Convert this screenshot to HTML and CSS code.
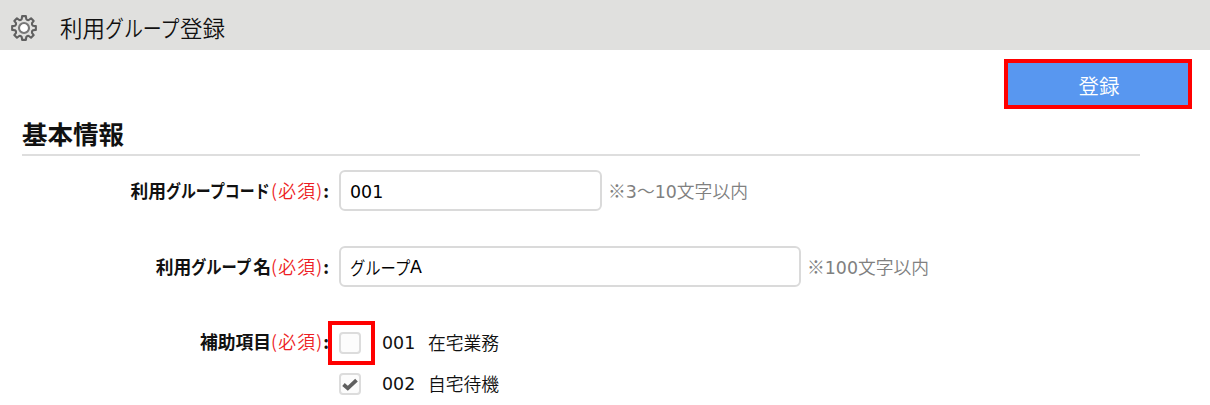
FILE: index.html
```html
<!DOCTYPE html>
<html lang="ja">
<head>
<meta charset="utf-8">
<title>利用グループ登録</title>
<link rel="stylesheet" href="styles.css">
</head>
<body>
<header class="topbar">
  <svg class="gear" viewBox="-13 -13 26 26" fill="none" stroke="#606060" stroke-width="2.1" stroke-linejoin="round">
    <path d="M-1.88-11.85L1.88-11.85L2.25-9.02Q3.14-7.58 4.79-7.97L7.05-9.71L9.71-7.05L7.97-4.79Q7.58-3.14 9.02-2.25L11.85-1.88L11.85 1.88L9.02 2.25Q7.58 3.14 7.97 4.79L9.71 7.05L7.05 9.71L4.79 7.97Q3.14 7.58 2.25 9.02L1.88 11.85L-1.88 11.85L-2.25 9.02Q-3.14 7.58-4.79 7.97L-7.05 9.71L-9.71 7.05L-7.97 4.79Q-7.58 3.14-9.02 2.25L-11.85 1.88L-11.85-1.88L-9.02-2.25Q-7.58-3.14-7.97-4.79L-9.71-7.05L-7.05-9.71L-4.79-7.97Q-3.14-7.58-2.25-9.02Z"/>
    <circle r="5" fill="#fff" stroke="#777"/>
  </svg>
  <h1 class="title">利用<span class="kana kana-title"><span>グループ</span></span>登録</h1>
</header>
<main class="content">
  <div class="actions"><button class="submit" type="button">登録</button></div>
  <h2 class="section">基本情報</h2>
  <div class="row">
    <div class="label">利用<span class="kana kana-code"><span>グループコード</span></span><span class="required">(必須)</span>:</div>
    <div class="field field-code">001</div>
    <div class="hint">※<span class="num">3</span>～<span class="num">10</span>文字以内</div>
  </div>
  <div class="row">
    <div class="label">利用<span class="kana kana-group"><span>グループ</span></span>名<span class="required">(必須)</span>:</div>
    <div class="field field-name"><span class="kana kana-input"><span>グループ</span></span><span class="num">A</span></div>
    <div class="hint">※<span class="num">100</span>文字以内</div>
  </div>
  <div class="row row-items">
    <div class="label">補助項目<span class="required">(必須)</span>:</div>
    <div class="items">
      <div class="item"><span class="check marked"></span><span class="code">001</span><span>在宅業務</span></div>
      <div class="item"><span class="check"><svg viewBox="0 0 22 22"><path d="M4.5 11.5l4.3 3.8 8.7-8.2" fill="none" stroke="#606060" stroke-width="3.8"/></svg></span><span class="code">002</span><span>自宅待機</span></div>
    </div>
  </div>
</main>
</body>
</html>
```
FILE: styles.css
```css
*, *::before { box-sizing: border-box; }
body {
  margin: 0;
  height: 405px;
  overflow: hidden;
  background: #fff;
  color: #111;
  font-family: "DejaVu Sans", "Noto Sans CJK JP", sans-serif;
  font-size: 17.8px;
  line-height: 24px;
}
.topbar {
  display: flex;
  align-items: center;
  height: 50px;
  padding: 5px 0 0 11px;
  background: #e0e0de;
}
.gear { width: 26px; height: 26px; }
.title {
  margin: 0 0 2px 23px;
  font-size: 22.5px;
  font-weight: 350;
  font-family: "Noto Sans CJK JP", sans-serif;
  line-height: 30px;
  white-space: nowrap;
}
.kana { display: inline-block; white-space: nowrap; }
.kana > span { display: inline-block; transform-origin: 0 50%; transform: scaleX(.84); }
.kana-title { width: 75px; }
.kana-code { width: 105px; }
.kana-group { width: 62px; }
.kana-input { width: 60px; }
.kana-group > span, .kana-input > span { transform: scaleX(.86); }
.content { padding: 9px 0 0 22px; }
.actions { display: flex; justify-content: flex-end; padding-right: 18px; }
.submit {
  width: 188px;
  height: 50px;
  padding: 1px 0 0 2px;
  border: 4px solid #f00;
  background: #5897f0;
  color: #fff;
  font: 350 20.5px "Noto Sans CJK JP", sans-serif;
}
.section {
  width: 1118px;
  height: 47px;
  margin: 0;
  padding-top: 7px;
  border-bottom: 2px solid #dedede;
  font: 700 25.5px/34px "Noto Sans CJK JP", sans-serif;
}
.row { display: flex; align-items: center; height: 41px; margin-bottom: 35px; }
.section + .row { margin-top: 14px; }
.label {
  display: flex;
  justify-content: flex-end;
  width: 307px;
  margin-right: 10px;
  padding-bottom: 1px;
  font-weight: 700;
  white-space: nowrap;
}
.label, .required { font-family: "Noto Sans CJK JP", sans-serif; }
.required { color: #ed1c24; font-weight: 350; letter-spacing: 1.2px; }
.num { font-family: "DejaVu Sans", sans-serif; font-size: 17.4px; font-weight: 400; }
.field {
  display: flex;
  align-items: center;
  height: 41px;
  padding-left: 9px;
  padding-top: 3px;
  border: 2px solid #dadada;
  border-radius: 6px;
  color: #000;
}
.field-code { width: 263px; font-size: 17.4px; }
.field-name { width: 462px; padding-top: 0; font-family: "Noto Sans CJK JP", sans-serif; font-weight: 350; }
.hint {
  margin-left: 6px;
  color: #808080;
  font-family: "Noto Sans CJK JP", sans-serif;
  font-weight: 350;
  white-space: nowrap;
}
.row-items { align-items: flex-start; }
.row-items .label { padding-top: 7px; }
.items { padding-top: 8px; }
.item {
  display: flex;
  align-items: center;
  height: 24px;
  margin-bottom: 17px;
  font-family: "Noto Sans CJK JP", sans-serif;
  font-weight: 350;
}
.code { width: 46px; margin: 2px 0 0 21px; font-family: "DejaVu Sans", sans-serif; font-size: 17.4px; font-weight: 400; }
.check {
  position: relative;
  width: 22px;
  height: 22px;
  margin-top: 2px;
  border: 2px solid #dcdcdc;
  border-radius: 4px;
  background: #fcfcfc;
}
.check svg { display: block; width: 22px; height: 22px; margin: -2px; }
.marked::before {
  content: "";
  position: absolute;
  left: -13px;
  top: -13px;
  width: 47px;
  height: 44px;
  border: 4px solid #f00;
}
```
